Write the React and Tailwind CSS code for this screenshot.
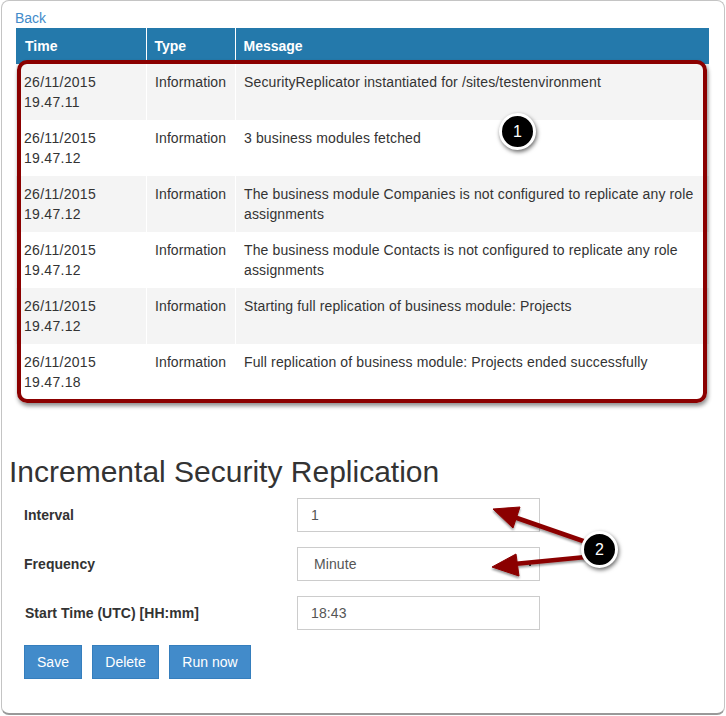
const rows = [
  ['19.47.11', 'SecurityReplicator instantiated for /sites/testenvironment'],
  ['19.47.12', '3 business modules fetched'],
  ['19.47.12', 'The business module Companies is not configured to replicate any role assignments'],
  ['19.47.12', 'The business module Contacts is not configured to replicate any role assignments'],
  ['19.47.12', 'Starting full replication of business module: Projects'],
  ['19.47.18', 'Full replication of business module: Projects ended successfully'],
];

function Field({ label, value, indent, caret }) {
  return (
    <div className="flex items-center h-[34px]">
      <label className="w-[273px] font-bold tracking-[0.03px]">{label}</label>
      <div className={`w-[243px] h-[34px] border border-[#ccc] flex items-center justify-between pr-[8px] text-[#555] tracking-[0.1px] ${indent}`}>
        {value}
        {caret && <span className="w-[2px] h-[2px] mt-[2px] bg-[#444]" />}
      </div>
    </div>
  );
}

function Badge({ n, className }) {
  return (
    <div className={`absolute w-[37px] h-[37px] rounded-full bg-black border-[3px] border-white shadow-[1px_2px_4px_rgba(0,0,0,0.6)] flex items-center justify-center text-white text-base ${className}`}>
      {n}
    </div>
  );
}

export default function App() {
  return (
    <div className="relative w-[726px] h-[716px] bg-white text-sm leading-5 text-[#333] font-['Liberation_Sans',Arial,sans-serif] overflow-hidden">
      <div className="ml-px w-[724px] h-[715px] rounded-lg border border-[#c4c4c4] border-b-2 border-b-[#999] pt-[7px] pl-[14px]">
        <a className="block h-5 -ml-px text-[#428bca]">Back</a>

        <table className="w-[693px] table-fixed border-collapse">
          <thead>
            <tr className="h-9 bg-[#2479ab] text-white text-left">
              <th className="w-[130px] pl-[9px] font-bold border-r border-white">Time</th>
              <th className="w-[89px] pl-[8px] font-bold border-r border-white">Type</th>
              <th className="pl-[8px] font-bold">Message</th>
            </tr>
          </thead>
          <tbody>
            {rows.map((r, i) => (
              <tr key={i} className={i % 2 === 0 ? 'h-14 bg-[#f4f4f4]' : 'h-14 bg-white'}>
                <td className="p-2 align-top border-r border-white tracking-[0.3px]">26/11/2015<br />{r[0]}</td>
                <td className="py-2 pl-[8.5px] align-top border-r border-white tracking-[0.1px]">Information</td>
                <td className="py-2 pl-[8.5px] pr-2 align-top tracking-[0.13px]">{r[1]}</td>
              </tr>
            ))}
          </tbody>
        </table>

        <h2 className="mt-[54px] -ml-[7px] text-[30px] leading-[36px] font-normal">Incremental Security Replication</h2>

        <div className="mt-[8px] pl-[8px] flex flex-col gap-[15px]">
          <Field label="Interval" value="1" indent="pl-[13px]" />
          <Field label="Frequency" value="Minute" indent="pl-[16px]" caret />
          <Field label={<span className="ml-px">Start Time (UTC) [HH:mm]</span>} value="18:43" indent="pl-[13px]" />
        </div>

        <div className="mt-[15px] pl-[8px] flex gap-[10px] text-white">
          <button className="h-[34px] w-[58px] bg-[#428bca] border border-[#357ebd]">Save</button>
          <button className="h-[34px] w-[67px] bg-[#428bca] border border-[#357ebd]">Delete</button>
          <button className="h-[34px] w-[82px] bg-[#428bca] border border-[#357ebd]">Run now</button>
        </div>
      </div>

      {/* annotations on top of the screenshot */}
      <div className="absolute left-[17px] top-[60px] w-[690px] h-[343px] rounded-[10px] border-[4px] border-[#8b0000] shadow-[1px_3px_4px_rgba(0,0,0,0.45)]" />

      <svg className="absolute left-0 top-0" width="726" height="716">
        <defs>
          <filter id="s" x="-20%" y="-20%" width="140%" height="140%">
            <feDropShadow dx="0" dy="2" stdDeviation="1.2" floodColor="#000" floodOpacity="0.4" />
          </filter>
        </defs>
        <g fill="#8b0000" stroke="#8b0000" filter="url(#s)">
          <path d="M586 542 L514 517" strokeWidth="4.5" fill="none" />
          <path d="M493 509 L520 507 L513 528 Z" strokeWidth="1" />
          <path d="M586 557 L514 564" strokeWidth="4.5" fill="none" />
          <path d="M492 567 L516 554 L519 576 Z" strokeWidth="1" />
        </g>
      </svg>

      <Badge n="1" className="left-[499px] top-[113px]" />
      <Badge n="2" className="left-[581px] top-[531px]" />
    </div>
  );
}
